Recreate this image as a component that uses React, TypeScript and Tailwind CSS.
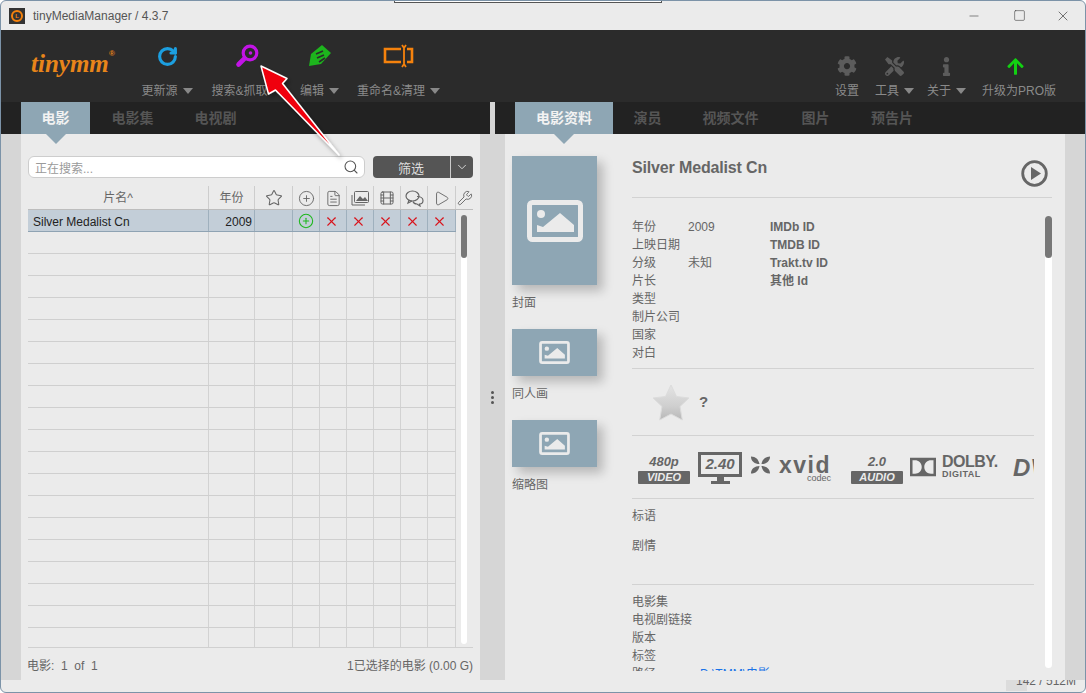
import { ChevronDown, CirclePlus, FileText, Film, Minus, Play, RotateCw, Search, Square, Star, Wrench, X } from "lucide-react";
import { FaArrowUp, FaCog, FaInfo, FaTools } from "react-icons/fa";

const COLS = [
  "w-[181px]",
  "w-[46px]",
  "w-[38px]",
  "w-[27px]",
  "w-[27px]",
  "w-[27px]",
  "w-[27px]",
  "w-[27px]",
  "w-[28px]",
];

const INFO = [
  ["年份", "2009", "IMDb ID"],
  ["上映日期", "", "TMDB ID"],
  ["分级", "未知", "Trakt.tv ID"],
  ["片长", "", "其他 Id"],
  ["类型", "", ""],
  ["制片公司", "", ""],
  ["国家", "", ""],
  ["对白", "", ""],
];

function Caret() {
  return <span className="ml-[5px] inline-block h-0 w-0 border-x-[5px] border-t-[6px] border-x-transparent border-t-[#888]" />;
}

function ToolItem({ icon, label, caret, className }: { icon: React.ReactNode; label: string; caret?: boolean; className: string }) {
  return (
    <div className={`flex flex-col items-center ${className}`}>
      <div className="flex h-[26px] items-center justify-center">{icon}</div>
      <div className="mt-[14px] flex items-center whitespace-nowrap text-[12px] leading-[16px] text-[#8a8a8a]">
        {label}
        {caret && <Caret />}
      </div>
    </div>
  );
}

function Tab({ label, active, className }: { label: string; active?: boolean; className: string }) {
  return (
    <div
      className={`relative flex h-[32px] items-center justify-center whitespace-nowrap pt-[1px] text-[14px] font-bold ${className} ${
        active ? "bg-[#8ea6b4] text-[#f2f2f2]" : "text-[#555]"
      }`}
    >
      {label}
      {active && (
        <span className="absolute left-1/2 top-full z-10 h-0 w-0 -translate-x-1/2 border-x-[10px] border-t-[10px] border-x-transparent border-t-[#8ea6b4]" />
      )}
    </div>
  );
}

function Row({ selected }: { selected?: boolean }) {
  return (
    <div className={`flex h-[22px] border-b ${selected ? "border-[#8fa3b3] bg-[#c3ced8]" : "border-[#cfcfcf]"}`}>
      {COLS.map((c, i) => (
        <div
          key={i}
          className={`flex items-center border-r ${c} ${selected ? "border-[#9fb0bd]" : "border-[#d2d2d2]"} ${
            i === 1 ? "justify-end pr-[2px] pt-[2px]" : i > 3 ? "justify-center pr-[4px] pt-[1px]" : i > 1 ? "justify-center pt-[1px]" : "pl-[5px] pt-[2px]"
          } text-[12px] text-[#222]`}
        >
          {selected && i === 0 && "Silver Medalist Cn"}
          {selected && i === 1 && "2009"}
          {selected && i === 3 && <CirclePlus size={16} strokeWidth={1.6} className="text-[#1fb81f]" />}
          {selected && i > 3 && <X size={15} strokeWidth={1.8} className="text-[#d8141c]" />}
        </div>
      ))}
    </div>
  );
}

function PicIcon({ big }: { big?: boolean }) {
  return (
    <svg width={big ? 56 : 31} height={big ? 42 : 23} viewBox="0 0 56 42" fill="none">
      <rect x="2.500" y="2.500" width="51" height="37" rx="3" stroke="#ebebeb" strokeWidth="5" />
      <circle cx="14" cy="14" r="4" fill="#ebebeb" />
      <path d="M10 32v-7l6 2 17-14 14 12v7z" fill="#ebebeb" />
    </svg>
  );
}

function Artwork({ label, className, big }: { label: string; className: string; big?: boolean }) {
  return (
    <div>
      <div className={`flex w-[85px] items-center justify-center bg-[#8ea6b4] shadow-[6px_6px_10px_rgba(0,0,0,0.22)] ${className}`}>
        <PicIcon big={big} />
      </div>
      <div className="mt-[10px] h-[16px] text-[12px] leading-[16px] text-[#666]">{label}</div>
    </div>
  );
}

function Badge({ top, bottom }: { top: string; bottom: string }) {
  return (
    <div className="flex w-[52px] shrink-0 flex-col items-center italic text-[#666]">
      <div className="text-[13px] font-bold leading-[17px]">{top}</div>
      <div className="mt-[1px] w-full rounded-[1px] bg-[#666] text-center text-[11px] font-bold leading-[13px] text-[#ebebeb]">{bottom}</div>
    </div>
  );
}

function MediaLogos() {
  return (
    <div className="flex h-[63px] w-[402px] items-center overflow-hidden border-b border-[#d2d2d2] pl-[6px] pt-[2px]">
      <Badge top="480p" bottom="VIDEO" />
      <div className="ml-[8px] flex shrink-0 flex-col items-center">
        <div className="flex h-[25px] w-[44px] items-center justify-center border-[3px] border-[#666] text-[15px] font-bold italic text-[#666]">2.40</div>
        <div className="h-[4px] w-[7px] bg-[#666]" />
        <div className="h-[3px] w-[19px] bg-[#666]" />
      </div>
      <svg width="21" height="20" viewBox="0 0 22 20" className="mb-[6px] ml-[8px] shrink-0" fill="#666">
        <path d="M1 1c5 0 8 3 9 8-5 0-9-3-9-8zM21 1c-5 0-8 3-9 8 5 0 9-3 9-8zM1 19c5 0 8-3 9-8-5 0-9 3-9 8zM21 19c-5 0-8-3-9-8 5 0 9 3 9 8z" />
      </svg>
      <div className="relative ml-[8px] h-[32px] w-[52px] shrink-0 text-[#666]">
        <span className="block text-[23px] font-bold leading-[26px] tracking-[1.5px]">xvid</span>
        <span className="absolute right-0 top-[20px] text-[9px] leading-[12px]">codec</span>
      </div>
      <div className="ml-[20px] shrink-0">
        <Badge top="2.0" bottom="AUDIO" />
      </div>
      <svg width="26" height="22" viewBox="0 0 31 22" className="mb-[2px] ml-[7px] shrink-0" fill="#666">
        <path fillRule="evenodd" d="M0 0h31v22H0zM3 3v16h3c4 0 8-3 8-8s-4-8-8-8zM28 3h-3c-4 0-8 3-8 8s4 8 8 8h3z" />
      </svg>
      <div className="mb-[2px] ml-[6px] w-[53px] shrink-0 text-[#666]">
        <div className="text-[16px] font-bold leading-[14px] tracking-[-0.5px]">DOLBY.</div>
        <div className="text-[9px] font-bold leading-[11px] tracking-[0.5px]">DIGITAL</div>
      </div>
      <div className="ml-[18px] shrink-0 text-[24px] font-bold italic leading-[24px] text-[#666]">DV</div>
    </div>
  );
}

function ToolbarIcons() {
  return (
    <>
      <ToolItem
        className="ml-[27px] w-[50px]"
        label="更新源"
        caret
        icon={<RotateCw size={21} strokeWidth={3.6} className="text-[#1c9fe0]" />}
      />
      <ToolItem
        className="ml-[20px] w-[70px]"
        label="搜索&抓取"
        caret
        icon={
          <svg width="24" height="24" viewBox="0 0 24 24" fill="none" stroke="#c214e6">
            <circle cx="15" cy="9" r="6.800" strokeWidth="3.200" />
            <path d="M9.500 14.500L3.500 20.500" strokeWidth="4.600" strokeLinecap="round" />
            <circle cx="15.500" cy="9" r="1.800" fill="#c214e6" stroke="none" />
          </svg>
        }
      />
      <ToolItem
        className="ml-[19px] w-[37px]"
        label="编辑"
        caret
        icon={
          <svg width="26" height="24" viewBox="0 0 26 24">
            <path d="M2 22l2-12L15 1l9 8-10 11z" fill="#1db51d" />
            <path d="M9 10l7-3M10 14l7-3M12 18l6-4" stroke="#2b2b2b" strokeWidth="1.600" />
          </svg>
        }
      />
      <ToolItem
        className="ml-[20px] w-[81px]"
        label="重命名&清理"
        caret
        icon={
          <svg width="31" height="24" viewBox="0 0 31 24" fill="none" stroke="#f5820d" strokeWidth="2.600">
            <path d="M18 5H2v13h16M24 5h5v13h-5" />
            <path d="M19 1l2 3 2-3M19 23l2-3 2 3M21 4v16" strokeWidth="1.800" />
          </svg>
        }
      />
      <div className="flex-1" />
      <ToolItem className="w-[24px]" label="设置" icon={<FaCog size={20} className="translate-y-[10px] text-[#5c5c5c]" />} />
      <ToolItem className="ml-[17px] w-[37px]" label="工具" caret icon={<FaTools size={19} className="translate-y-[10px] text-[#5c5c5c]" />} />
      <ToolItem className="ml-[15px] w-[37px]" label="关于" caret icon={<FaInfo size={19} className="translate-y-[10px] text-[#5c5c5c]" />} />
      <ToolItem className="ml-[17px] mr-[29px] w-[74px]" label="升级为PRO版" icon={<FaArrowUp size={19} className="-translate-x-[4px] translate-y-[10px] text-[#12d012]" />} />
    </>
  );
}

function HeadPicture() {
  return (
    <svg width="18" height="16" viewBox="0 0 18 16" fill="none" stroke="#666">
      <path d="M1 5v10h13" />
      <rect x="3.500" y="1.500" width="14" height="11" rx="1" />
      <path d="M5 11l4-5 3 3 2-2 3 4z" fill="#666" stroke="none" />
    </svg>
  );
}

function HeadBubbles() {
  return (
    <svg width="19" height="17" viewBox="0 0 19 17" fill="none" stroke="#666" strokeWidth="1.200">
      <ellipse cx="7.500" cy="6" rx="6.500" ry="5" />
      <path d="M4 10l-1 3 4-2" />
      <path d="M12 6.500c3 0 6 1.500 6 4s-2 3.500-3.500 3.500l.5 2-3-2c-2 0-3.500-1-4-2.500" />
    </svg>
  );
}

function MovieList() {
  const head = [
    <span key="n">片名^</span>,
    <span key="y">年份</span>,
    <Star key="s" size={18} strokeWidth={1.4} />,
    <CirclePlus key="p" size={17} strokeWidth={1.3} />,
    <FileText key="f" size={17} strokeWidth={1.3} />,
    <HeadPicture key="i" />,
    <Film key="m" size={16} strokeWidth={1.5} />,
    <HeadBubbles key="c" />,
    <Play key="t" size={17} strokeWidth={1.3} />,
  ];
  return (
    <div className="flex w-[459px] flex-col bg-[#ebebeb] pl-[7px] pr-[7px]">
      <div className="mt-[22px] flex h-[22px] items-center">
        <div className="flex h-[22px] w-[337px] items-center justify-between rounded-[6px] border border-[#cdcdcd] bg-white pl-[6px] pr-[5px] text-[12px] text-[#9a9a9a]">
          <span className="pt-[3px]">正在搜索...</span>
          <Search size={16} strokeWidth={1.6} className="text-[#555]" />
        </div>
        <div className="ml-[8px] flex h-[22px] w-[100px] items-center rounded-[4px] bg-[#555] text-[12px] text-[#ddd]">
          <div className="flex-1 pr-[1px] pt-[3px] text-center text-[13px]">筛选</div>
          <div className="flex h-full w-[23px] items-center justify-center border-l border-[#ccc]">
            <ChevronDown size={14} strokeWidth={1.6} />
          </div>
        </div>
      </div>
      <div className="mt-[8px] flex h-[24px] border-b border-[#bdbdbd] text-[12px] text-[#666]">
        {COLS.map((c, i) => (
          <div key={i} className={`flex items-center justify-center border-r border-[#cdcdcd] pt-[1px] ${c}`}>
            {head[i]}
          </div>
        ))}
        <div className="flex flex-1 items-center justify-center pt-[1px]">
          <Wrench size={16} strokeWidth={1.4} />
        </div>
      </div>
      <div className="flex h-[438px] border-b border-[#d0d0d0]">
        <div className="h-full overflow-hidden">
          <Row selected />
          {Array.from({ length: 19 }).map((_, i) => (
            <Row key={i} />
          ))}
        </div>
        <div className="ml-[5px] mt-[5px] h-[429px] w-[6px] rounded-full bg-white">
          <div className="h-[43px] rounded-full bg-[#777]" />
        </div>
      </div>
      <div className="flex flex-1 items-center justify-between pt-[3px] text-[12px] text-[#666]">
        <span className="-ml-[1px] whitespace-pre">电影:  1  of  1</span>
        <span>1已选择的电影 (0.00 G)</span>
      </div>
    </div>
  );
}

function MovieInfo() {
  return (
    <div className="flex w-[560px] bg-[#ebebeb]">
      <div className="flex w-[127px] flex-col gap-[18px] pl-[7px] pt-[22px]">
        <Artwork label="封面" className="h-[129px]" big />
        <Artwork label="同人画" className="h-[47px]" />
        <Artwork label="缩略图" className="h-[47px]" />
      </div>
      <div className="flex w-[420px] flex-col">
        <div className="flex h-[64px] w-[420px] items-start justify-between border-b border-[#d2d2d2] pr-[4px] pt-[24px]">
          <span className="text-[16px] font-bold leading-[20px] tracking-[-0.15px] text-[#666]">Silver Medalist Cn</span>
          <svg width="27" height="27" viewBox="0 0 27 27" className="mt-[2px]">
            <circle cx="13.500" cy="13.500" r="11.800" fill="none" stroke="#666" strokeWidth="2.800" />
            <path d="M10 7l10 6.500L10 20z" fill="#666" />
          </svg>
        </div>
        <div className="mt-[18px] flex h-[455px] overflow-hidden">
          <div className="w-[402px] pt-[2px] text-[12px] text-[#666]">
            {INFO.map(([k, v, id]) => (
              <div key={k} className="flex h-[18px] items-center">
                <span className="w-[56px]">{k}</span>
                <span className="w-[82px]">{v}</span>
                <span className="font-bold">{id}</span>
              </div>
            ))}
            <div className="mt-[6px] flex h-[68px] items-center border-y border-[#d2d2d2] pl-[20px]">
              <svg width="38" height="37" viewBox="0 0 38 37">
                <defs>
                  <linearGradient id="starFill" x1="0" y1="0" x2="0" y2="1">
                    <stop offset="0" stopColor="#e4e4e4" />
                    <stop offset="0.6" stopColor="#cfcfcf" />
                    <stop offset="1" stopColor="#b8b8b8" />
                  </linearGradient>
                </defs>
                <path
                  d="M19 1l5.500 11.500 12.500 1.500-9 8.500 2.300 13.500L19 30l-11.300 6 2.300-13.500-9-8.500 12.500-1.500z"
                  fill="url(#starFill)"
                  stroke="#dcdcdc"
                  strokeLinejoin="round"
                />
              </svg>
              <span className="ml-[9px] text-[15px] font-bold">?</span>
            </div>
            <MediaLogos />
            <div className="flex h-[86px] flex-col border-b border-[#d2d2d2] pt-[9px]">
              <div className="leading-[16px]">标语</div>
              <div className="mt-[14px] leading-[16px]">剧情</div>
            </div>
            <div className="pt-[8px]">
              {["电影集", "电视剧链接", "版本", "标签"].map((k) => (
                <div key={k} className="flex h-[18px] items-center">{k}</div>
              ))}
              <div className="flex h-[18px] items-center">
                <span className="w-[68px]">路径</span>
                <span className="text-[#1a73e8]">D:\TMM\电影</span>
              </div>
            </div>
          </div>
          <div className="ml-[11px] h-[452px] w-[7px] rounded-full bg-white">
            <div className="h-[42px] rounded-full bg-[#777]" />
          </div>
        </div>
      </div>
    </div>
  );
}

export default function App() {
  return (
    <div className="relative flex h-[693px] w-[1086px] flex-col overflow-hidden rounded-[6px] border border-[#7c93a8] bg-[#ebebeb] font-['Liberation_Sans','Noto_Sans_CJK_SC',sans-serif]">
      {/* title bar */}
      <div className="flex h-[29px] shrink-0 items-center pl-[8px] text-[12px] text-[#555]">
        <div className="flex h-[16px] w-[16px] items-center justify-center bg-[#333]">
          <span className="flex h-[12px] w-[12px] items-center justify-center rounded-full border-2 border-[#f5820d] text-[6px] font-bold leading-none text-[#f5820d]">L</span>
        </div>
        <span className="ml-[8px] pt-[1px]">tinyMediaManager / 4.3.7</span>
        <div className="flex-1" />
        <Minus size={14} strokeWidth={1} className="text-[#333]" />
        <Square size={13} strokeWidth={1} className="ml-[32px] text-[#333]" />
        <X size={16} strokeWidth={1} className="ml-[29px] mr-[14px] text-[#333]" />
      </div>

      {/* toolbar */}
      <div className="flex h-[72px] shrink-0 items-start bg-[#2b2b2b] pt-[13px]">
        <div className="relative ml-[30px] mt-[4px] w-[84px] font-['Liberation_Serif',serif] text-[25px] font-bold italic leading-[34px] text-[#e8851a]">
          tinymm
          <span className="absolute right-0 top-[2px] font-['Liberation_Sans',sans-serif] text-[8px] not-italic leading-[10px]">®</span>
        </div>
        <ToolbarIcons />
      </div>

      {/* tabs */}
      <div className="flex h-[32px] shrink-0 bg-[#222]">
        <div className="flex w-[479px] pl-[20px]">
          <Tab label="电影" active className="w-[69px]" />
          <Tab label="电影集" className="ml-[21px] w-[43px]" />
          <Tab label="电视剧" className="ml-[40px] w-[43px]" />
        </div>
        <div className="ml-[10px] w-[5px] bg-[#d6d6d6]" />
        <div className="ml-[20px] flex">
          <Tab label="电影资料" active className="w-[98px]" />
          <Tab label="演员" className="ml-[21px] w-[27px]" />
          <Tab label="视频文件" className="ml-[41px] w-[57px]" />
          <Tab label="图片" className="ml-[43px] w-[27px]" />
          <Tab label="预告片" className="ml-[42px] w-[42px]" />
        </div>
      </div>

      {/* panels */}
      <div className="flex h-[546px] shrink-0 bg-[#d6d6d6] pl-[20px]">
        <MovieList />
        <div className="flex w-[25px] flex-col items-center justify-center gap-[2px] pb-[20px]">
          <span className="h-[3px] w-[3px] rounded-full bg-[#555]" />
          <span className="h-[3px] w-[3px] rounded-full bg-[#555]" />
          <span className="h-[3px] w-[3px] rounded-full bg-[#555]" />
        </div>
        <MovieInfo />
      </div>

      {/* memory label, only the lower half is visible */}
      <div className="flex h-[12px] justify-end overflow-hidden pr-[9px] text-[12px] leading-[12px] text-[#666]">
        <span className="relative mt-[-5px]">
          <span className="absolute left-[-10px] top-[5px] h-[11px] w-[21px] bg-[#dcdcdc]" />
          <span className="relative">142 / 512M</span>
        </span>
      </div>

      {/* screenshot annotation arrow */}
      <svg className="pointer-events-none absolute left-[234px] top-[49px]" width="125" height="125" viewBox="235 50 125 125">
        <defs>
          <filter id="arrowShadow" x="-20%" y="-20%" width="150%" height="150%">
            <feDropShadow dx="2" dy="3" stdDeviation="2" floodColor="#000" floodOpacity="0.35" />
          </filter>
        </defs>
        <path
          d="M339 155L282.500 83.500 287 78.500 261 66 268.500 94 275.500 90z"
          fill="#f0000a"
          stroke="#fff"
          strokeWidth="1.500"
          strokeLinejoin="round"
          filter="url(#arrowShadow)"
        />
      </svg>

      {/* sliver of another window over the top edge */}
      <div className="absolute left-[393px] top-[-1px] h-[3px] w-[268px] border border-[#555] bg-white" />
    </div>
  );
}
